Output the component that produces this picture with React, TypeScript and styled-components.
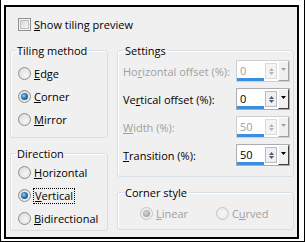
import React from 'react';
import styled, { createGlobalStyle } from 'styled-components';

const Global = createGlobalStyle`
  html, body { margin: 0; padding: 0; background: #fff; }
  body {
    font-family: "Open Sans", "Noto Sans", Arial, sans-serif;
    font-size: 11px;
    color: #000;
  }
`;

const Shot = styled.div`
  box-sizing: border-box;
  width: 305px;
  height: 242px;
  border: 1px solid #000;
  border-top: none;
  padding: 5px 5px 2px 3px;
  background: #fff;
  display: flex;
`;

const Dialog = styled.div`
  flex: 1;
  border: 2px solid #000;
  background: #f0f0f0;
  display: flex;
  flex-direction: column;
  padding: 11px 3px 0 4px;
`;

const CheckRow = styled.label`
  display: flex;
  align-items: center;
  gap: 3px;
  height: 13px;
  margin-left: 8px;
  line-height: 13px;
  white-space: nowrap;
`;

const CheckBox = styled.span`
  box-sizing: border-box;
  width: 13px;
  height: 13px;
  border: 1px solid #8e8f8f;
  background: #f4f4f4;
  padding: 1px;
  display: flex;
  &::after {
    content: '';
    flex: 1;
    border: 1px solid #bdbdbd;
    background: linear-gradient(135deg, #d6d6d6, #f8f8f8);
  }
`;

const Columns = styled.div`
  display: grid;
  grid-template-columns: 98px 177px;
  column-gap: 9px;
  margin-top: 12px;
`;

const Column = styled.div<{ $gap: number }>`
  display: flex;
  flex-direction: column;
  gap: ${p => p.$gap}px;
`;

const Group = styled.fieldset<{ $pt: number; $pb: number; $pl: number }>`
  margin: 0;
  min-width: 0;
  border: 1px solid #d5dfe5;
  border-radius: 3px;
  padding: ${p => p.$pt}px 3px ${p => p.$pb}px ${p => p.$pl}px;
  display: flex;
  flex-direction: column;
  box-shadow: inset 1px 1px 0 #fff;
`;

const Legend = styled.legend<{ $ml: number }>`
  padding: 0 1px;
  margin-left: ${p => p.$ml}px;
  line-height: 15px;
  height: 15px;
  color: #000;
  white-space: nowrap;
`;

const RadioRow = styled.label<{ $disabled?: boolean; $h?: number }>`
  display: flex;
  align-items: center;
  gap: 3px;
  height: ${p => p.$h ?? 23}px;
  color: ${p => (p.$disabled ? '#a0a0a0' : '#000')};
  white-space: nowrap;
`;

const RadioDot = styled.span<{ $checked?: boolean; $disabled?: boolean }>`
  box-sizing: border-box;
  width: 13px;
  height: 13px;
  flex: none;
  border-radius: 50%;
  border: 1px solid ${p => (p.$disabled ? '#c4c4c4' : '#8e8f8f')};
  background: ${p =>
    p.$disabled
      ? 'radial-gradient(circle at 50% 50%, #f4f4f4 0, #f0f0f0 40%, #e6e6e6 100%)'
      : 'radial-gradient(circle at 60% 60%, #f6f6f6 0, #e3e3e3 60%, #cfcfcf 100%)'};
  display: flex;
  align-items: center;
  justify-content: center;
  &::after {
    content: '';
    width: 7px;
    height: 7px;
    border-radius: 50%;
    display: ${p => (p.$checked ? 'block' : 'none')};
    background: ${p =>
      p.$disabled
        ? 'radial-gradient(circle at 40% 40%, #d8d8d8 0, #a9a9a9 60%, #9a9a9a 100%)'
        : 'radial-gradient(circle at 40% 40%, #8fd0f5 0, #2c77b4 45%, #163f63 100%)'};
  }
`;

const Focus = styled.span`
  outline: 1px dotted #000;
  outline-offset: 0;
  padding: 0 1px;
  line-height: 14px;
`;

const SettingRow = styled.div<{ $disabled?: boolean }>`
  display: flex;
  align-items: center;
  justify-content: space-between;
  height: 22px;
  white-space: nowrap;
  color: ${p => (p.$disabled ? '#a0a0a0' : '#000')};
`;

const Rows = styled.div`
  display: flex;
  flex-direction: column;
  gap: 6px;
`;

const Spin = styled.div<{ $disabled?: boolean }>`
  box-sizing: border-box;
  display: flex;
  flex: none;
  width: 54px;
  height: 22px;
  border: 1px solid ${p => (p.$disabled ? '#cfcfcf' : '#abadb3')};
  background: #fff;
`;

const Field = styled.div<{ $disabled?: boolean }>`
  flex: 1;
  display: flex;
  flex-direction: column;
  justify-content: space-between;
  color: ${p => (p.$disabled ? '#a0a0a0' : '#000')};
`;

const Value = styled.span`
  padding: 3px 0 0 3px;
  line-height: 14px;
`;

const Bar = styled.div`
  height: 3px;
  width: 27px;
  background: #3d8ede;
`;

const Arrows = styled.div<{ $disabled?: boolean }>`
  width: 10px;
  display: flex;
  flex-direction: column;
  justify-content: center;
  align-items: center;
  gap: 1px;
  margin: 2px 1px;
  background: ${p => (p.$disabled ? '#f4f4f4' : '#eef0f3')};
  border: 1px solid ${p => (p.$disabled ? '#dadada' : '#b9bcc1')};
  svg { display: block; }
`;

const Drop = styled.div<{ $disabled?: boolean }>`
  box-sizing: border-box;
  width: 11px;
  display: flex;
  justify-content: center;
  padding-top: 6px;
  background: #f0f0f0;
  border-left: 1px solid #fff;
  border-top: 1px solid #fff;
  border-right: 1px solid ${p => (p.$disabled ? '#a0a0a0' : '#404040')};
  border-bottom: 1px solid ${p => (p.$disabled ? '#a0a0a0' : '#404040')};
  svg { display: block; }
`;

const CornerRow = styled.div`
  display: flex;
  padding-left: 17px;
`;

const CornerItem = styled.div<{ $w: number }>`
  width: ${p => p.$w}px;
`;

function Tri({ up, color, w = 5, h = 3 }: { up?: boolean; color: string; w?: number; h?: number }) {
  return (
    <svg width={w} height={h} viewBox={`0 0 ${w} ${h}`}>
      <polygon
        points={up ? `0,${h} ${w},${h} ${w / 2},0` : `0,0 ${w},0 ${w / 2},${h}`}
        fill={color}
      />
    </svg>
  );
}

function Spinner({ value, disabled }: { value: string; disabled?: boolean }) {
  const arrow = disabled ? '#b5b5b5' : '#4a5a6a';
  return (
    <Spin $disabled={disabled}>
      <Field $disabled={disabled}>
        <Value>{value}</Value>
        <Bar />
      </Field>
      <Arrows $disabled={disabled}>
        <Tri up color={arrow} />
        <Tri color={arrow} />
      </Arrows>
      <Drop $disabled={disabled}>
        <Tri color={disabled ? '#a0a0a0' : '#000'} w={5} h={3} />
      </Drop>
    </Spin>
  );
}

function Radio({
  children,
  checked,
  disabled,
  h,
}: {
  children: React.ReactNode;
  checked?: boolean;
  disabled?: boolean;
  h?: number;
}) {
  return (
    <RadioRow $disabled={disabled} $h={h}>
      <RadioDot $checked={checked} $disabled={disabled} />
      <span>{children}</span>
    </RadioRow>
  );
}

export default function App() {
  return (
    <>
      <Global />
      <Shot>
        <Dialog>
          <CheckRow>
            <CheckBox />
            <span>
              <u>S</u>how tiling preview
            </span>
          </CheckRow>
          <Columns>
            <Column $gap={8}>
              <Group $pt={4} $pb={6} $pl={7}>
                <Legend $ml={-2}>Tiling method</Legend>
                <Radio>
                  <u>E</u>dge
                </Radio>
                <Radio checked>
                  <u>C</u>orner
                </Radio>
                <Radio>
                  <u>M</u>irror
                </Radio>
              </Group>
              <Group $pt={0} $pb={0} $pl={7}>
                <Legend $ml={-2}>Direction</Legend>
                <Radio>
                  <u>H</u>orizontal
                </Radio>
                <RadioRow>
                  <RadioDot $checked />
                  <Focus>
                    <u>V</u>ertical
                  </Focus>
                </RadioRow>
                <Radio>
                  <u>B</u>idirectional
                </Radio>
              </Group>
            </Column>
            <Column $gap={8}>
              <Group $pt={2} $pb={10} $pl={5}>
                <Legend $ml={1}>Settings</Legend>
                <Rows>
                  <SettingRow $disabled>
                    <span>
                      Ho<u>r</u>izontal offset (%):
                    </span>
                    <Spinner value="0" disabled />
                  </SettingRow>
                  <SettingRow>
                    <span>
                      Ve<u>r</u>tical offset (%):
                    </span>
                    <Spinner value="0" />
                  </SettingRow>
                  <SettingRow $disabled>
                    <span>
                      <u>W</u>idth (%):
                    </span>
                    <Spinner value="50" disabled />
                  </SettingRow>
                  <SettingRow>
                    <span>
                      <u>T</u>ransition (%):
                    </span>
                    <Spinner value="50" />
                  </SettingRow>
                </Rows>
              </Group>
              <Group $pt={7} $pb={9} $pl={5}>
                <Legend $ml={1}>Corner style</Legend>
                <CornerRow>
                  <CornerItem $w={82}>
                    <Radio checked disabled h={13}>
                      <u>L</u>inear
                    </Radio>
                  </CornerItem>
                  <CornerItem $w={80}>
                    <Radio disabled h={13}>
                      C<u>u</u>rved
                    </Radio>
                  </CornerItem>
                </CornerRow>
              </Group>
            </Column>
          </Columns>
        </Dialog>
      </Shot>
    </>
  );
}
